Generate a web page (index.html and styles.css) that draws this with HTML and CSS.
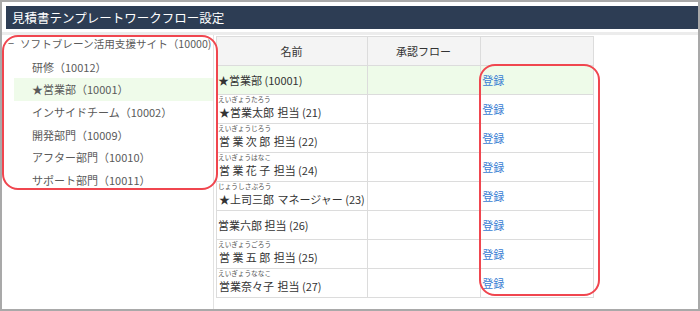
FILE: index.html
```html
<!DOCTYPE html>
<html lang="ja">
<head>
    <meta charset="UTF-8">
    <meta name="viewport" content="width=device-width, initial-scale=1.0">
    <title>見積書テンプレートワークフロー設定</title>
    <link rel="stylesheet" href="styles.css">
</head>
<body>
    <div class="frame">
        <header class="title-bar">見積書テンプレートワークフロー設定</header>
        <div class="rule"></div>

        <div class="main">
            <!-- 組織ツリー -->
            <div class="tree">
                <ul class="tree-root">
                    <li><span class="toggle">−</span><span class="root-label">ソフトブレーン活用支援サイト（10000)</span>
                        <ul class="tree-children">
                            <li>研修（10012）</li>
                            <li class="selected">★営業部（10001）</li>
                            <li>インサイドチーム（10002）</li>
                            <li>開発部門（10009）</li>
                            <li>アフター部門（10010）</li>
                            <li>サポート部門（10011）</li>
                        </ul>
                    </li>
                </ul>
            </div>

            <!-- 承認フロー一覧 -->
            <table class="flow">
                <thead>
                    <tr>
                        <th class="col-name">名前</th>
                        <th class="col-flow">承認フロー</th>
                        <th class="col-act"></th>
                    </tr>
                </thead>
                <tbody>
                    <tr class="dept">
                        <td>★営業部 (10001)</td>
                        <td></td>
                        <td><a href="#">登録</a></td>
                    </tr>
                    <tr>
                        <td class="ruby"><span class="rb"><span class="rt">えいぎょうたろう</span><span class="rbase">★営業太郎</span></span> 担当 (21)</td>
                        <td></td>
                        <td><a href="#">登録</a></td>
                    </tr>
                    <tr>
                        <td class="ruby"><span class="rb"><span class="rt">えいぎょうじろう</span><span class="rbase">営業次郎</span></span> 担当 (22)</td>
                        <td></td>
                        <td><a href="#">登録</a></td>
                    </tr>
                    <tr>
                        <td class="ruby"><span class="rb"><span class="rt">えいぎょうはなこ</span><span class="rbase">営業花子</span></span> 担当 (24)</td>
                        <td></td>
                        <td><a href="#">登録</a></td>
                    </tr>
                    <tr>
                        <td class="ruby"><span class="rb"><span class="rt">じょうしさぶろう</span><span class="rbase">★上司三郎</span></span> マネージャー (23)</td>
                        <td></td>
                        <td><a href="#">登録</a></td>
                    </tr>
                    <tr>
                        <td>営業六郎 担当 (26)</td>
                        <td></td>
                        <td><a href="#">登録</a></td>
                    </tr>
                    <tr>
                        <td class="ruby"><span class="rb"><span class="rt">えいぎょうごろう</span><span class="rbase">営業五郎</span></span> 担当 (25)</td>
                        <td></td>
                        <td><a href="#">登録</a></td>
                    </tr>
                    <tr>
                        <td class="ruby"><span class="rb"><span class="rt">えいぎょうななこ</span><span class="rbase">営業奈々子</span></span> 担当 (27)</td>
                        <td></td>
                        <td><a href="#">登録</a></td>
                    </tr>
                </tbody>
            </table>
        </div>

        <!-- 注目枠 -->
        <div class="mark mark-tree"></div>
        <div class="mark mark-links"></div>
    </div>
</body>
</html>
```

FILE: styles.css
```css
body {
    margin: 0;
    padding: 0;
    font-family: "Noto Sans CJK JP", "Noto Sans", sans-serif;
    background-color: white;
}

.frame {
    position: relative;
    width: 700px;
    height: 311px;
    box-sizing: border-box;
    border: 2px solid #a9a9a9;
    display: flex;
    flex-direction: column;
    overflow: hidden;
}

.title-bar {
    margin: 4px 0 0 4px;
    height: 23px;
    line-height: 23px;
    padding-left: 6px;
    background-color: #2d3d54;
    color: white;
    font-size: 12.5px;
}

.rule {
    margin-top: 3px;
    height: 3px;
    background-color: #ececec;
}

.main {
    flex: 1;
    display: flex;
    align-items: flex-start;
}

.tree {
    width: 211px;
    align-self: stretch;
    border-right: 1px solid #e2e2e2;
    overflow: hidden;
    font-size: 11px;
    color: #5a5a5a;
    white-space: nowrap;
}

.tree ul {
    list-style: none;
    margin: 0;
    padding: 0;
}

.tree-root {
    margin-top: -3px !important;
}

.tree li {
    line-height: 22.67px;
}

.tree-root > li {
    padding-left: 6px;
}

.toggle {
    display: inline-block;
    width: 12px;
}

.root-label {
    font-size: 10.6px;
}

.tree-children {
    margin-left: 6px !important;
}

.tree-children li {
    padding-left: 18px;
}

.tree-children li.selected {
    background-color: #effbea;
}

.flow {
    margin: 1px 0 0 2px;
    width: 378px;
    border-collapse: collapse;
    font-size: 11px;
    color: #333;
}

.flow th,
.flow td {
    border: 1px solid #dcdcdc;
    height: 28px;
    padding: 0 2px 0 1px;
    text-align: left;
    white-space: nowrap;
}

.flow th {
    background-color: #f4f4f4;
    font-weight: normal;
    text-align: center;
}

.col-name {
    width: 141px;
}

.col-flow,
.col-act {
    width: 111px;
}

.flow tr.dept td {
    background-color: #eefbe9;
}

.flow td.ruby {
    vertical-align: top;
    line-height: 16px;
}

/* ふりがな付きの氏名 */
.rb {
    display: inline-block;
}

.rt {
    display: block;
    font-size: 6.7px;
    line-height: 9px;
    color: #555;
}

.rbase {
    display: block;
    line-height: 16px;
    padding: 0 1px;
    text-align: justify;
    text-align-last: justify;
}

.flow a {
    color: #3a80d3;
    text-decoration: none;
}

.mark {
    position: absolute;
    box-sizing: border-box;
    border: 2px solid #f0464f;
    border-radius: 16px;
}

.mark-tree {
    left: 0;
    top: 33px;
    width: 216px;
    height: 155px;
}

.mark-links {
    left: 477px;
    top: 62px;
    width: 121px;
    height: 232px;
}
```
